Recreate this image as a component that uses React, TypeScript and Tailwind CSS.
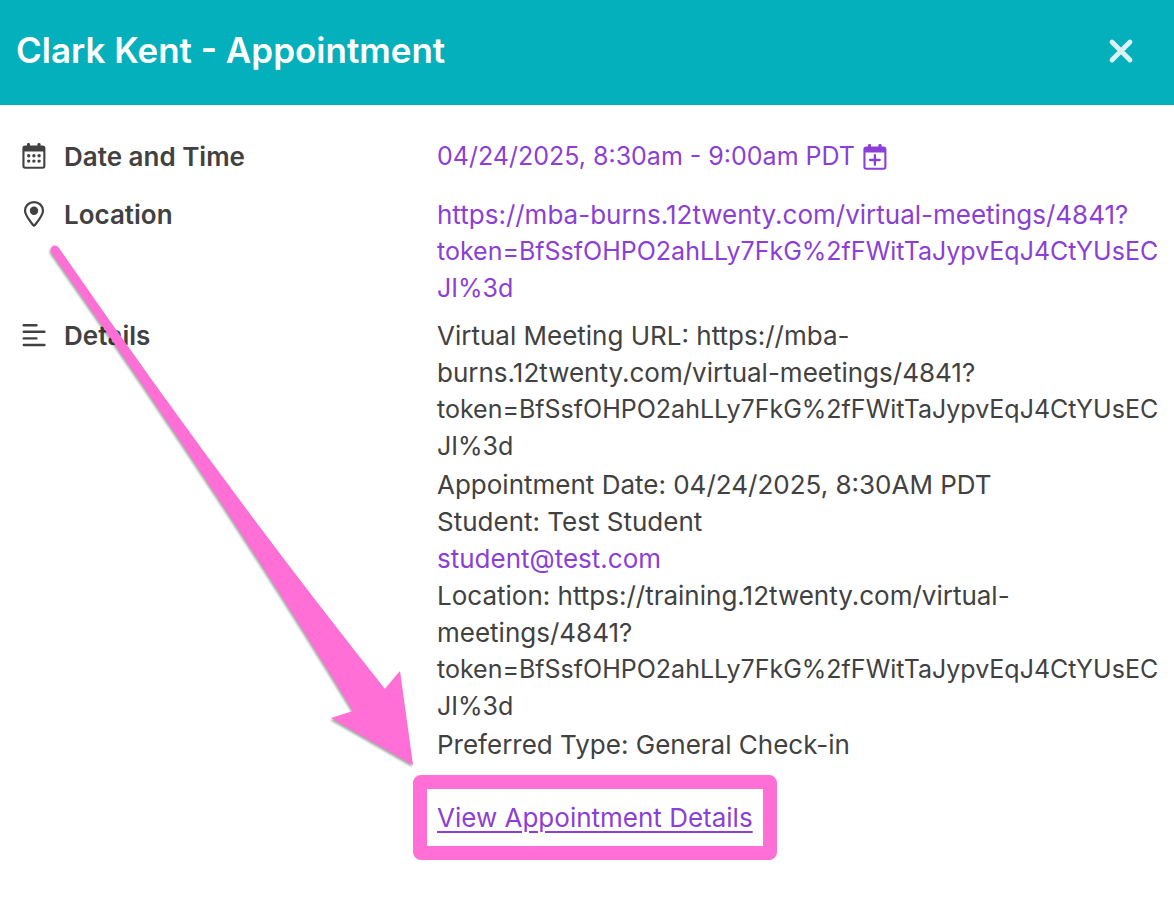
import type { ReactNode } from 'react';

interface Line {
  text: string;
  small?: boolean;
}

const token: Line[] = [
  { text: 'token=BfSsfOHPO2ahLLy7FkG%2fFWitTaJypvEqJ4CtYUsEC', small: true },
  { text: 'JI%3d', small: true },
];

const locationLines: Line[] = [
  { text: 'https://mba-burns.12twenty.com/virtual-meetings/4841?' },
  ...token,
];

const meetingLines: Line[] = [
  { text: 'Virtual Meeting URL: https://mba-' },
  { text: 'burns.12twenty.com/virtual-meetings/4841?' },
  ...token,
];

const studentLines: Line[] = [
  { text: 'Appointment Date: 04/24/2025, 8:30AM PDT' },
  { text: 'Student: Test Student' },
];

const placeLines: Line[] = [
  { text: 'Location: https://training.12twenty.com/virtual-' },
  { text: 'meetings/4841?' },
  ...token,
];

function CalendarFrame({ children }: { children: ReactNode }) {
  return (
    <svg className="shrink-0" width="24" height="26" viewBox="0 0 24 26" fill="currentColor" aria-hidden="true">
      <rect x="5" y="0" width="3" height="6" rx="1.2" />
      <rect x="15.5" y="0" width="3" height="6" rx="1.2" />
      <path
        fillRule="evenodd"
        d="M3.200 2.500H20.600A2.800 2.800 0 0 1 23.400 5.300V23A2.800 2.800 0 0 1 20.600 25.800H3.200A2.800 2.800 0 0 1 .4 23V5.300A2.800 2.800 0 0 1 3.200 2.500ZM2.500 8.600V22.900Q2.500 23.800 3.400 23.800H20.400Q21.300 23.800 21.300 22.900V8.600Z"
      />
      {children}
    </svg>
  );
}

function CalendarIcon() {
  return (
    <CalendarFrame>
      <circle cx="6.7" cy="12.8" r="1.7" />
      <circle cx="11.9" cy="12.8" r="1.7" />
      <circle cx="17.1" cy="12.8" r="1.7" />
      <circle cx="6.7" cy="18.1" r="1.7" />
      <circle cx="11.9" cy="18.1" r="1.7" />
      <circle cx="17.1" cy="18.1" r="1.7" />
    </CalendarFrame>
  );
}

function CalendarPlusIcon() {
  return (
    <CalendarFrame>
      <path d="M11.900 11.200v9.600M7.100 16h9.600" stroke="currentColor" strokeWidth="2.300" strokeLinecap="round" />
    </CalendarFrame>
  );
}

function PinIcon() {
  return (
    <svg width="24" height="26" viewBox="0 0 24 26" aria-hidden="true">
      <path
        d="M12 1.100C6.800 1.100 3 4.900 3 9.800c0 4.500 4.600 9.800 8.200 14.400.4.6 1.200.6 1.600 0C16.400 19.600 21 14.300 21 9.800 21 4.900 17.200 1.100 12 1.100Z"
        fill="none"
        stroke="currentColor"
        strokeWidth="2.200"
      />
      <circle cx="12" cy="9.8" r="4.2" fill="currentColor" />
    </svg>
  );
}

function LinesIcon() {
  return (
    <svg width="24" height="26" viewBox="0 0 24 26" fill="currentColor" aria-hidden="true">
      <rect x="0.600" y="2" width="15" height="2.400" rx="1.200" />
      <rect x="0.600" y="8.600" width="23" height="2.400" rx="1.200" />
      <rect x="0.600" y="15.200" width="15" height="2.400" rx="1.200" />
      <rect x="0.600" y="21.800" width="23" height="2.400" rx="1.200" />
    </svg>
  );
}

function Lines({ lines }: { lines: Line[] }) {
  return (
    <>
      {lines.map((line, i) => (
        <span key={i} className={line.small ? 'block text-[25px]' : 'block'}>
          {line.text}
        </span>
      ))}
    </>
  );
}

interface RowProps {
  icon: ReactNode;
  label: string;
  children: ReactNode;
}

function Row({ icon, label, children }: RowProps) {
  return (
    <div className="flex min-h-12">
      <dt className="flex h-9 w-[415px] shrink-0 items-center gap-[18px] font-semibold">
        {icon}
        {label}
      </dt>
      <dd className="min-w-0 flex-1 whitespace-nowrap">{children}</dd>
    </div>
  );
}

export default function App() {
  return (
    <div className="relative min-h-screen bg-white font-['Inter',sans-serif] text-[26px] leading-[37px] text-[#414141]">
      <header className="flex items-start justify-between bg-[#04b0bb] px-4 pt-8 pb-9 text-white">
        <h1 className="text-[35px] leading-[37px] font-semibold">Clark Kent - Appointment</h1>
        <button type="button" aria-label="Close" className="mr-6 flex h-[37px] items-center text-[#dbf3f5]">
          <svg width="26" height="26" viewBox="0 0 26 26" aria-hidden="true">
            <path d="M4 4l18 18M22 4L4 22" stroke="currentColor" strokeWidth="4.800" strokeLinecap="round" />
          </svg>
        </button>
      </header>

      <dl className="flex flex-col gap-[10px] px-[22px] pt-[33px]">
        <Row icon={<CalendarIcon />} label="Date and Time">
          <a href="#calendar" className="flex items-center gap-2 text-[25px] text-[#8b3fd6]">
            04/24/2025, 8:30am - 9:00am PDT
            <CalendarPlusIcon />
          </a>
        </Row>
        <Row icon={<PinIcon />} label="Location">
          <a href="#meeting" className="block text-[#8b3fd6]">
            <Lines lines={locationLines} />
          </a>
        </Row>
        <Row icon={<LinesIcon />} label="Details">
          <div className="flex flex-col gap-px">
            <p>
              <Lines lines={meetingLines} />
            </p>
            <p>
              <Lines lines={studentLines} />
              <a href="mailto:student@test.com" className="block w-fit text-[#8b3fd6]">
                student@test.com
              </a>
              <Lines lines={placeLines} />
            </p>
            <p>Preferred Type: General Check-in</p>
          </div>
          <span className="relative mt-9 inline-block">
            <a href="#details" className="text-[#8b3fd6] underline decoration-2 underline-offset-4">
              View Appointment Details
            </a>
            <span className="pointer-events-none absolute -inset-6 rounded-lg border-[14px] border-[#ff6fd5]" />
          </span>
        </Row>
      </dl>

      {/* Callout arrow */}
      <svg
        className="pointer-events-none absolute top-[240px] left-[44px] drop-shadow-[-1px_2px_1px_rgba(0,0,0,0.35)]"
        width="376"
        height="530"
        viewBox="44 240 376 530"
        aria-hidden="true"
      >
        <path
          d="M51 252C49 246 56 243 59 248Q222 484 385 689L400 671L413 765L331 718L353 711Q220 493 51 252Z"
          fill="#ff6fd5"
        />
      </svg>
    </div>
  );
}
